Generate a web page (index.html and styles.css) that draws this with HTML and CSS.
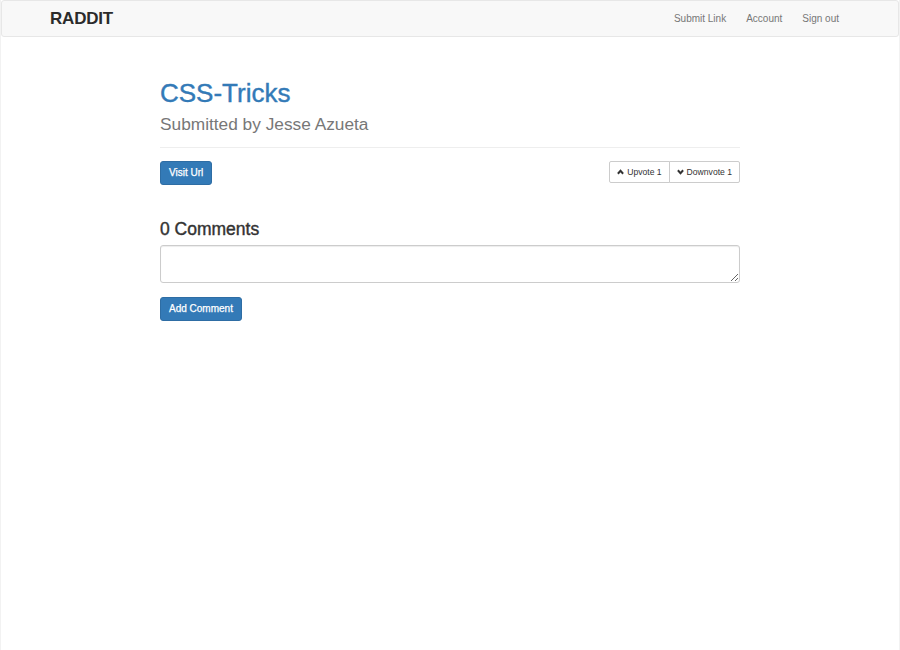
FILE: index.html
```html
<!DOCTYPE html>
<html lang="en">
<head>
<meta charset="utf-8">
<title>RADDIT</title>
<link rel="stylesheet" href="styles.css">
</head>
<body>
<div class="page">
  <nav class="navbar">
    <a class="brand" href="#">RADDIT</a>
    <ul class="nav-links">
      <li><a href="#">Submit Link</a></li>
      <li><a href="#">Account</a></li>
      <li><a href="#">Sign out</a></li>
    </ul>
  </nav>
  <main class="content">
    <h1 class="title"><a href="#">CSS-Tricks</a></h1>
    <h2 class="subtitle">Submitted by Jesse Azueta</h2>
    <hr class="divider">
    <div class="actions">
      <a class="btn btn-primary" href="#">Visit Url</a>
      <div class="btn-group">
        <button class="btn-vote" type="button"><svg class="chev" viewBox="0 0 8 6" width="7" height="6"><polyline points="1,5 4,1.6 7,5" fill="none" stroke="#333" stroke-width="2.2"/></svg>Upvote 1</button>
        <button class="btn-vote" type="button"><svg class="chev" viewBox="0 0 8 6" width="7" height="6"><polyline points="1,1 4,4.4 7,1" fill="none" stroke="#333" stroke-width="2.2"/></svg>Downvote 1</button>
      </div>
    </div>
    <h3 class="comments-title">0 Comments</h3>
    <textarea class="comment-box"></textarea>
    <button class="btn btn-primary" type="button">Add Comment</button>
  </main>
</div>
</body>
</html>
```

FILE: styles.css
```css
* { box-sizing: border-box; }
html, body {
  margin: 0;
  padding: 0;
  background: #fff;
}
body {
  font-family: "Liberation Sans", Arial, Helvetica, sans-serif;
  font-size: 10px;
  color: #333;
}
.page {
  min-height: 650px;
  border-left: 1px solid #f2f2f2;
  border-right: 1px solid #f2f2f2;
}
.navbar {
  height: 37px;
  background: #f8f8f8;
  border: 1px solid #e7e7e7;
  border-radius: 3px;
  display: flex;
  align-items: center;
  justify-content: space-between;
  padding: 0 59px 0 48px;
}
.brand {
  font-size: 17px;
  font-weight: bold;
  color: #2b2b2b;
  text-decoration: none;
  letter-spacing: -0.2px;
}
.nav-links {
  list-style: none;
  margin: 0;
  padding: 0;
  display: flex;
  gap: 20px;
}
.nav-links a {
  color: #777;
  text-decoration: none;
  font-size: 10px;
}
.content {
  width: 580px;
  margin: 0 auto;
}
.title {
  margin: 42px 0 0;
  font-size: 26px;
  font-weight: normal;
  line-height: 1.1;
  -webkit-text-stroke: 0.4px #337ab7;
}
.title a {
  color: #337ab7;
  text-decoration: none;
}
.subtitle {
  margin: 7px 0 0;
  font-size: 17.3px;
  font-weight: normal;
  line-height: 1.1;
  color: #777;
}
.divider {
  margin: 13px 0 0;
  border: 0;
  border-top: 1px solid #eee;
  height: 0;
}
.actions {
  margin-top: 13px;
  display: flex;
  justify-content: space-between;
  align-items: flex-start;
}
.btn {
  display: inline-block;
  height: 24px;
  padding: 0 8px;
  line-height: 22px;
  font-family: inherit;
  font-size: 10px;
  color: #fff;
  text-decoration: none;
  border-radius: 3px;
  border: 1px solid transparent;
  cursor: pointer;
  -webkit-text-stroke: 0.25px #fff;
}
.btn-primary {
  background: #337ab7;
  border-color: #2e6da4;
}
.btn-group {
  display: flex;
}
.btn-vote {
  height: 22px;
  padding: 0 7px;
  font-family: inherit;
  font-size: 8.6px;
  line-height: 20px;
  color: #333;
  background: #fff;
  border: 1px solid #ccc;
  display: flex;
  align-items: center;
  gap: 3px;
  cursor: pointer;
}
.btn-vote:first-child {
  border-radius: 2px 0 0 2px;
}
.btn-vote + .btn-vote {
  margin-left: -1px;
  border-radius: 0 2px 2px 0;
}
.chev {
  display: block;
}
.comments-title {
  margin: 35px 0 0;
  font-size: 17.5px;
  font-weight: normal;
  line-height: 1.1;
  color: #333;
  -webkit-text-stroke: 0.4px #333;
}
.comment-box {
  display: block;
  width: 580px;
  height: 38px;
  margin: 6px 0 14px;
  padding: 4px 8px;
  border: 1px solid #ccc;
  border-radius: 3px;
  box-shadow: inset 0 1px 1px rgba(0,0,0,.075);
  resize: vertical;
  font-family: inherit;
  font-size: 10px;
}
```
